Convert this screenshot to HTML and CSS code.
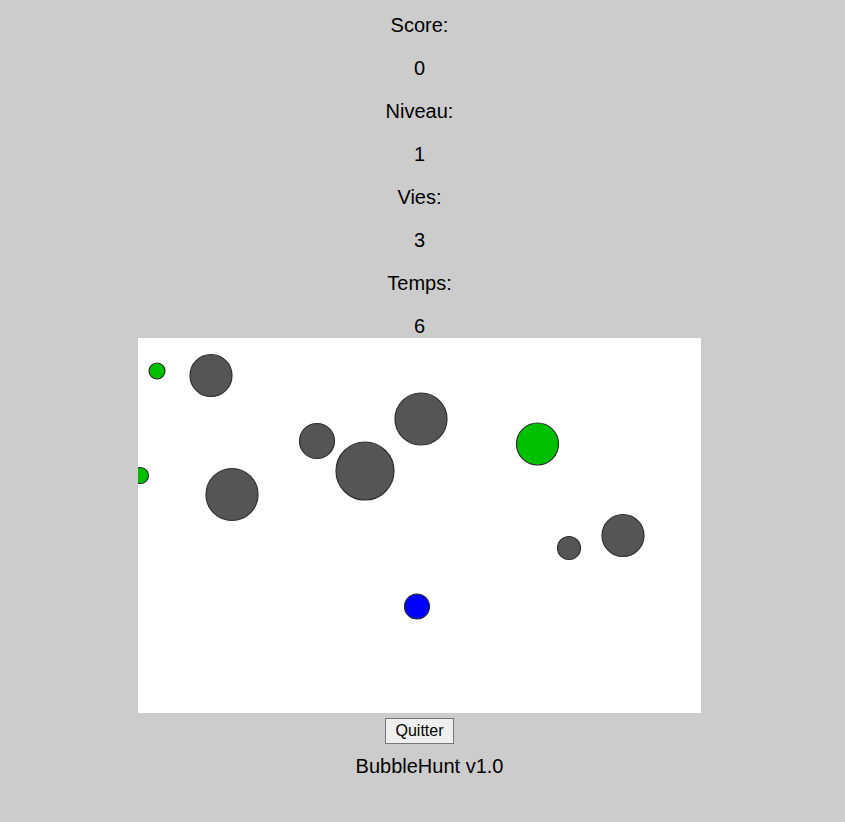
FILE: index.html
```html
<!DOCTYPE html>
<html lang="fr">
<head>
<meta charset="utf-8">
<title>BubbleHunt</title>
<link rel="stylesheet" href="styles.css">
</head>
<body>
<main class="game">
  <div class="stats">
    <div class="line">Score:</div>
    <div class="line">0</div>
    <div class="line">Niveau:</div>
    <div class="line">1</div>
    <div class="line">Vies:</div>
    <div class="line">3</div>
    <div class="line">Temps:</div>
    <div class="line">6</div>
  </div>
  <svg class="board" width="563" height="375" viewBox="0 0 563 375">
    <rect x="0" y="0" width="563" height="375" fill="#ffffff"/>
    <g stroke="#2e2e2e" stroke-width="1.2">
      <circle cx="19" cy="33" r="8" fill="#00c000"/>
      <circle cx="73" cy="37.5" r="21" fill="#555555"/>
      <circle cx="179" cy="103" r="17.5" fill="#555555"/>
      <circle cx="283" cy="81" r="26" fill="#555555"/>
      <circle cx="227" cy="133" r="29" fill="#555555"/>
      <circle cx="399.5" cy="106" r="21" fill="#00c000"/>
      <circle cx="2.5" cy="137.5" r="8" fill="#00c000"/>
      <circle cx="94" cy="156.5" r="26" fill="#555555"/>
      <circle cx="485" cy="197.5" r="21" fill="#555555"/>
      <circle cx="431" cy="210" r="11.5" fill="#555555"/>
      <circle cx="279" cy="268.5" r="12.5" fill="#0000ff"/>
    </g>
  </svg>
  <button class="quit" type="button">Quitter</button>
  <div class="version">BubbleHunt v1.0</div>
</main>
</body>
</html>
```

FILE: styles.css
```css
html, body {
  margin: 0;
  padding: 0;
  background: #cccccc;
}

body {
  font-family: "Liberation Sans", Arial, sans-serif;
  color: #000;
}

.game {
  width: 839px;
  padding-top: 14px;
  display: flex;
  flex-direction: column;
  align-items: center;
}

.stats {
  display: flex;
  flex-direction: column;
  align-items: center;
  gap: 20px;
}

.line {
  font-size: 20px;
  line-height: 23px;
  height: 23px;
}

.board {
  display: block;
  margin-left: -1px;
}

.quit {
  margin-top: 5px;
  font-family: "Liberation Sans", Arial, sans-serif;
  font-size: 16px;
  line-height: 18px;
  height: 26px;
  padding: 3px 9px;
  background: #efefef;
  border: 1px solid #767676;
  border-radius: 0;
  color: #000;
}

.version {
  margin-top: 11px;
  margin-left: 20px;
  font-size: 20px;
  line-height: 23px;
}
```
